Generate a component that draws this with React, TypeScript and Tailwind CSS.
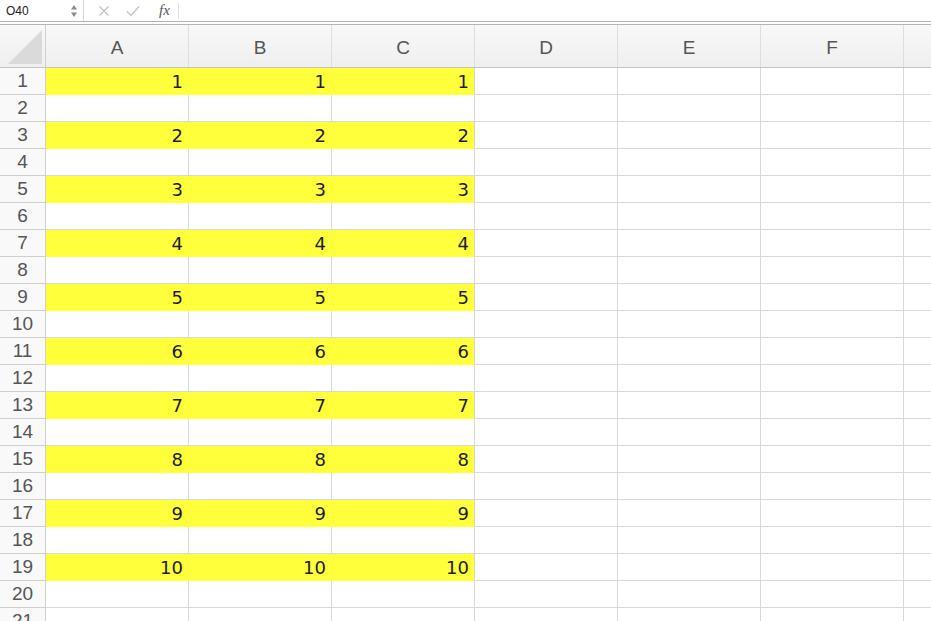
import React from 'react';

const COLS = ['A', 'B', 'C', 'D', 'E', 'F', ''];
const ROWS = Array.from({ length: 21 }, (_, i) => i + 1);

const Cell: React.FC<{ row: number; col: number }> = ({ row, col }) => {
  const filled = row % 2 === 1 && row <= 19 && col < 3;
  const value = filled ? String((row + 1) / 2) : '';
  const last = col === COLS.length - 1;
  return (
    <div
      className={`h-full shrink-0 flex items-center justify-end pr-[5px] text-[18px] text-[#1c1c1c] border-b ${
        last ? 'flex-1' : 'w-[143px] border-r'
      } ${
        filled
          ? col === 2
            ? 'bg-[#ffff3b] border-b-[#ffff3b] border-r-[#d4d4d4]'
            : 'bg-[#ffff3b] border-[#ffff3b]'
          : 'bg-white border-[#d9d9d9]'
      }`}
      style={{ fontFamily: '"DejaVu Sans", Verdana, sans-serif' }}
    >
      {value}
    </div>
  );
};

const FormulaBar: React.FC = () => (
  <div className="h-[22px] flex items-center bg-white border-b border-[#b4b4b4]">
    <div className="w-[84px] h-full flex items-center justify-between pl-[6px] pr-[5px] border-r border-[#d6d6d6]">
      <span className="text-[12px] text-[#222]" style={{ fontFamily: '"Liberation Sans", Arial, sans-serif' }}>
        O40
      </span>
      <svg width="8" height="16" viewBox="0 0 8 16">
        <path d="M4 2 L7 6.5 H1 Z" fill="#8a8a8a" />
        <path d="M4 14 L7 9.5 H1 Z" fill="#8a8a8a" />
      </svg>
    </div>
    <div className="flex items-center h-full pl-[14px] gap-[16px]">
      <svg width="12" height="12" viewBox="0 0 12 12">
        <path d="M1.5 1.5 L10.5 10.5 M10.5 1.5 L1.5 10.5" stroke="#c4c4c4" strokeWidth="1.4" />
      </svg>
      <svg width="14" height="12" viewBox="0 0 14 12">
        <path d="M1 6.5 L5 10.5 L13 1.5" stroke="#c4c4c4" strokeWidth="1.4" fill="none" />
      </svg>
      <span
        className="text-[15px] italic text-[#555] ml-[3px] leading-none"
        style={{ fontFamily: '"Liberation Serif", "Times New Roman", serif' }}
      >
        fx
      </span>
    </div>
    <div className="ml-[8px] w-px h-[16px] bg-[#e0e0e0]" />
  </div>
);

const App: React.FC = () => {
  return (
    <div className="w-[931px] h-[621px] overflow-hidden bg-white select-none">
      <FormulaBar />
      <div className="h-[3px] border-b border-[#b4b4b4] bg-white" />
      {/* column headers */}
      <div
        className="h-[43px] flex border-b border-[#c4c4c4] bg-gradient-to-b from-[#f8f8f8] to-[#efefef]"
        style={{ fontFamily: '"Liberation Sans", Arial, sans-serif' }}
      >
        <div className="w-[46px] shrink-0 h-full border-r border-[#cfcfcf] relative">
          <svg className="absolute left-[8px] top-[5px]" width="34" height="34" viewBox="0 0 34 34">
            <path d="M34 0 L34 34 L0 34 Z" fill="#dadada" />
          </svg>
        </div>
        {COLS.map((c, i) => (
          <div
            key={i}
            className={`h-full flex items-center justify-center pt-[4px] text-[19px] text-[#555] ${
              i === COLS.length - 1 ? 'flex-1' : 'w-[143px] shrink-0 border-r border-[#dedede]'
            }`}
          >
            {c}
          </div>
        ))}
      </div>
      {ROWS.map((r) => (
        <div key={r} className="h-[27px] flex">
          <div
            className="w-[46px] shrink-0 h-full flex items-center justify-center text-[19px] text-[#555] bg-[#f9f9f9] border-r border-b border-[#cfcfcf]"
            style={{ fontFamily: '"Liberation Sans", Arial, sans-serif' }}
          >
            {r}
          </div>
          {COLS.map((_, i) => (
            <Cell key={i} row={r} col={i} />
          ))}
        </div>
      ))}
    </div>
  );
};

export default App;
